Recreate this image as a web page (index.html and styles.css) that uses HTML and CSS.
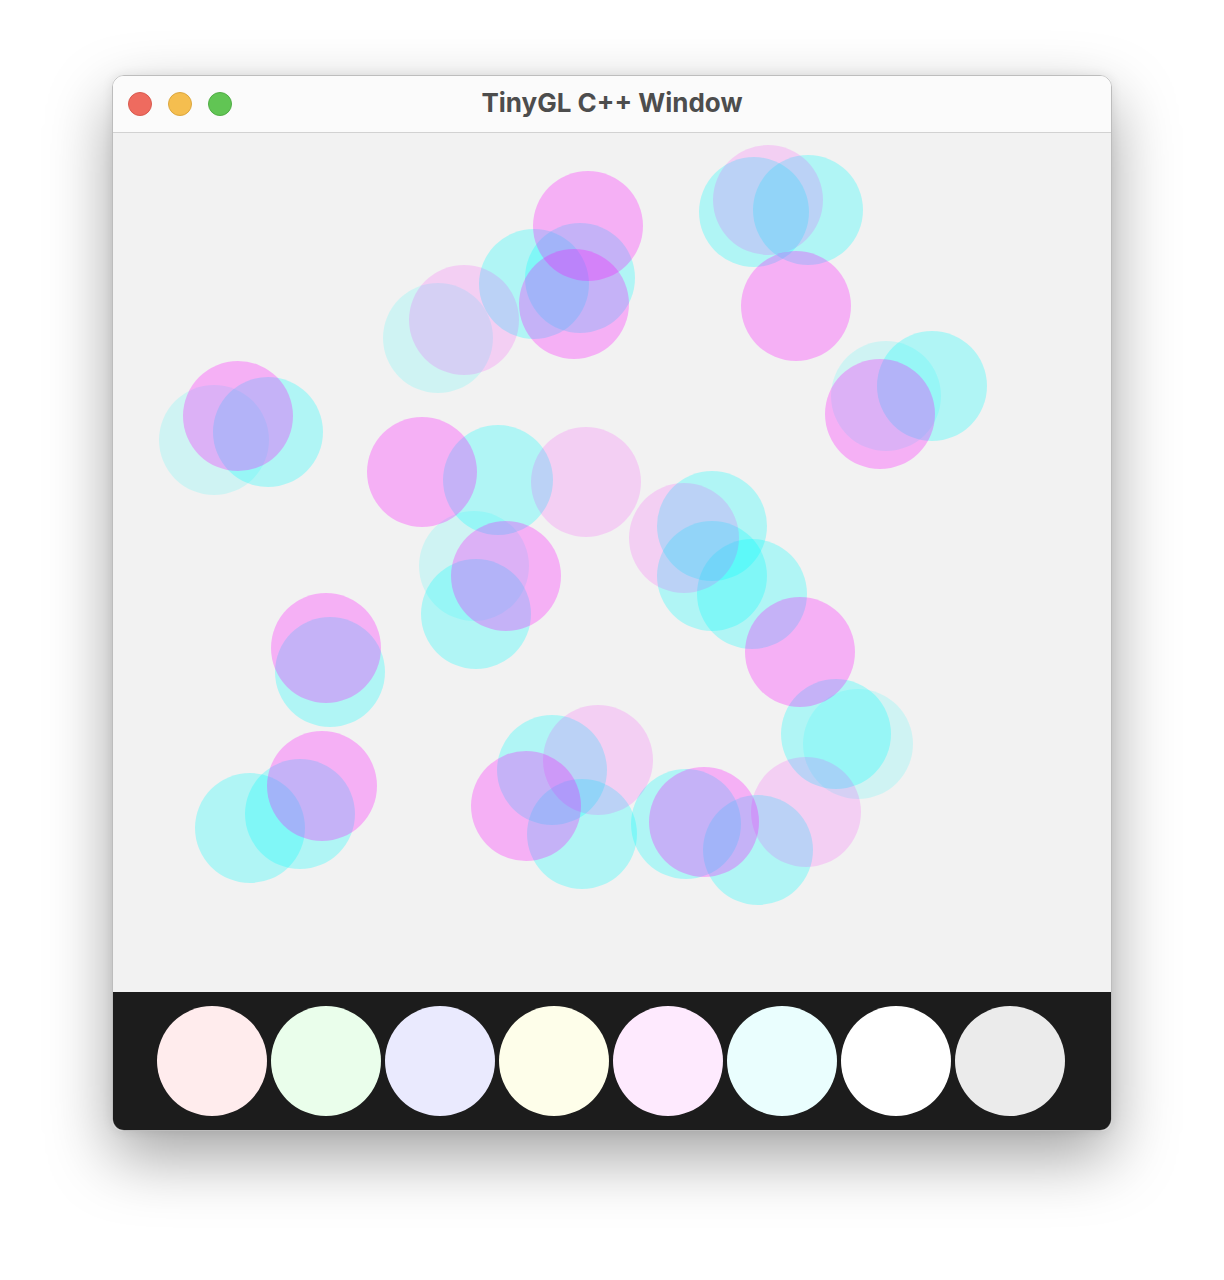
FILE: index.html
```html
<!DOCTYPE html>
<html>
<head>
<meta charset="utf-8">
<link rel="stylesheet" href="styles.css">
</head>
<body>
<div class="stage">
  <div class="window">
    <div class="titlebar">
      <div class="lights">
        <span class="light red"></span>
        <span class="light yellow"></span>
        <span class="light green"></span>
      </div>
      <div class="title">TinyGL C++ Window</div>
    </div>
    <div class="canvas">
      <span class="dot lc" style="left:270px;top:150px"></span>
      <span class="dot lc" style="left:46px;top:252px"></span>
      <span class="dot lc" style="left:718px;top:208px"></span>
      <span class="dot lc" style="left:306px;top:378px"></span>
      <span class="dot lc" style="left:690px;top:556px"></span>

      <span class="dot cy" style="left:586px;top:24px"></span>
      <span class="dot cy" style="left:640px;top:22px"></span>
      <span class="dot cy" style="left:366px;top:96px"></span>
      <span class="dot cy" style="left:412px;top:90px"></span>
      <span class="dot cy" style="left:100px;top:244px"></span>
      <span class="dot cy" style="left:330px;top:292px"></span>
      <span class="dot cy" style="left:764px;top:198px"></span>
      <span class="dot cy" style="left:308px;top:426px"></span>
      <span class="dot cy" style="left:162px;top:484px"></span>
      <span class="dot cy" style="left:82px;top:640px"></span>
      <span class="dot cy" style="left:132px;top:626px"></span>
      <span class="dot cy" style="left:384px;top:582px"></span>
      <span class="dot cy" style="left:414px;top:646px"></span>
      <span class="dot cy" style="left:544px;top:338px"></span>
      <span class="dot cy" style="left:544px;top:388px"></span>
      <span class="dot cy" style="left:584px;top:406px"></span>
      <span class="dot cy" style="left:668px;top:546px"></span>
      <span class="dot cy" style="left:518px;top:636px"></span>
      <span class="dot cy" style="left:590px;top:662px"></span>

      <span class="dot lp" style="left:600px;top:12px"></span>
      <span class="dot lp" style="left:296px;top:132px"></span>
      <span class="dot lp" style="left:418px;top:294px"></span>
      <span class="dot lp" style="left:430px;top:572px"></span>
      <span class="dot lp" style="left:516px;top:350px"></span>
      <span class="dot lp" style="left:638px;top:624px"></span>

      <span class="dot mg" style="left:628px;top:118px"></span>
      <span class="dot mg" style="left:420px;top:38px"></span>
      <span class="dot mg" style="left:406px;top:116px"></span>
      <span class="dot mg" style="left:70px;top:228px"></span>
      <span class="dot mg" style="left:254px;top:284px"></span>
      <span class="dot mg" style="left:712px;top:226px"></span>
      <span class="dot mg" style="left:338px;top:388px"></span>
      <span class="dot mg" style="left:158px;top:460px"></span>
      <span class="dot mg" style="left:154px;top:598px"></span>
      <span class="dot mg" style="left:358px;top:618px"></span>
      <span class="dot mg" style="left:632px;top:464px"></span>
      <span class="dot mg" style="left:536px;top:634px"></span>
    </div>
    <div class="palette">
      <span class="swatch s1"></span>
      <span class="swatch s2"></span>
      <span class="swatch s3"></span>
      <span class="swatch s4"></span>
      <span class="swatch s5"></span>
      <span class="swatch s6"></span>
      <span class="swatch s7"></span>
      <span class="swatch s8"></span>
    </div>
  </div>
</div>
</body>
</html>
```
FILE: styles.css
```css
html, body {
  margin: 0;
  padding: 0;
  background: #ffffff;
}
body {
  width: 1224px;
  height: 1280px;
  overflow: hidden;
  font-family: Inter, "Liberation Sans", sans-serif;
}
.stage {
  padding: 75px 0 0 112px;
}
.window {
  width: 1000px;
  height: 1056px;
  box-sizing: border-box;
  border: 1px solid #bdbdbd;
  border-radius: 12px;
  overflow: hidden;
  display: flex;
  flex-direction: column;
  box-shadow: 0 26px 64px rgba(0, 0, 0, 0.36), 0 0 12px rgba(0, 0, 0, 0.08);
}
.titlebar {
  height: 56px;
  flex: none;
  background: #fbfbfb;
  border-bottom: 1px solid #d2d2d2;
  display: flex;
  align-items: center;
  position: relative;
}
.lights {
  display: flex;
  gap: 16px;
  padding-left: 15px;
}
.light {
  width: 24px;
  height: 24px;
  border-radius: 50%;
  box-sizing: border-box;
}
.light.red { background: #ee6b5f; border: 1px solid #d95a4f; }
.light.yellow { background: #f5be4f; border: 1px solid #dca73e; }
.light.green { background: #61c554; border: 1px solid #50ad45; }
.title {
  position: absolute;
  left: 0;
  right: 0;
  top: 0;
  bottom: 0;
  display: flex;
  align-items: center;
  justify-content: center;
  font-size: 26px;
  font-weight: 700;
  color: #4d4d4d;
  padding-bottom: 3px;
}
.canvas {
  height: 859px;
  flex: none;
  background: #f2f2f2;
  position: relative;
  overflow: hidden;
}
.dot {
  position: absolute;
  width: 110px;
  height: 110px;
  border-radius: 50%;
}
.mg { background: rgba(255, 0, 255, 0.27); }
.cy { background: rgba(0, 255, 255, 0.27); }
.lp { background: rgba(255, 0, 255, 0.14); }
.lc { background: rgba(0, 255, 255, 0.14); }
.palette {
  flex: 1;
  background: #1c1c1c;
  display: flex;
  align-items: flex-start;
  gap: 4px;
  padding: 14px 0 0 44px;
}
.swatch {
  width: 110px;
  height: 110px;
  border-radius: 50%;
  flex: none;
}
.s1 { background: #ffeced; }
.s2 { background: #eafeeb; }
.s3 { background: #eaeafe; }
.s4 { background: #fefeea; }
.s5 { background: #feeafe; }
.s6 { background: #eafefe; }
.s7 { background: #ffffff; }
.s8 { background: #ebebeb; }
```
